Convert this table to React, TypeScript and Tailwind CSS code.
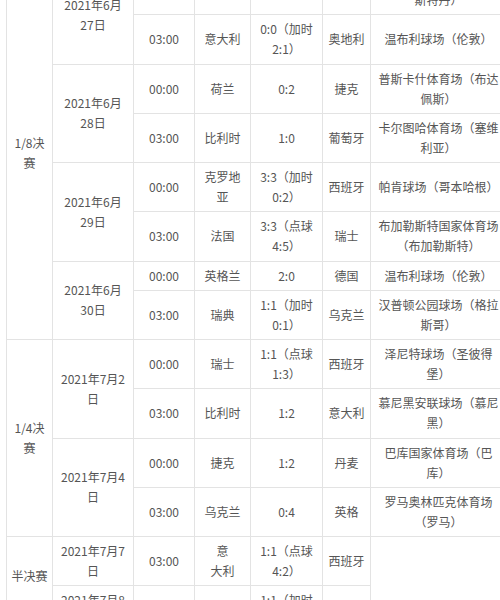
import React from 'react';

type Cell = { text: string; rowSpan?: number };

// each string uses "|" for a line break
const rows: Cell[][] = [
  [{ text: '1/8决|赛', rowSpan: 8 }, { text: '2021年6月|27日', rowSpan: 2 }, { text: '00:00' }, { text: '威尔士' }, { text: '0:4' }, { text: '丹麦' }, { text: '约翰·克鲁伊夫球场（阿姆|斯特丹）' }],
  [{ text: '03:00' }, { text: '意大利' }, { text: '0:0（加时|2:1）' }, { text: '奥地利' }, { text: '温布利球场（伦敦）' }],
  [{ text: '2021年6月|28日', rowSpan: 2 }, { text: '00:00' }, { text: '荷兰' }, { text: '0:2' }, { text: '捷克' }, { text: '普斯卡什体育场（布达|佩斯）' }],
  [{ text: '03:00' }, { text: '比利时' }, { text: '1:0' }, { text: '葡萄牙' }, { text: '卡尔图哈体育场（塞维|利亚）' }],
  [{ text: '2021年6月|29日', rowSpan: 2 }, { text: '00:00' }, { text: '克罗地|亚' }, { text: '3:3（加时|0:2）' }, { text: '西班牙' }, { text: '帕肯球场（哥本哈根）' }],
  [{ text: '03:00' }, { text: '法国' }, { text: '3:3（点球|4:5）' }, { text: '瑞士' }, { text: '布加勒斯特国家体育场|（布加勒斯特）' }],
  [{ text: '2021年6月|30日', rowSpan: 2 }, { text: '00:00' }, { text: '英格兰' }, { text: '2:0' }, { text: '德国' }, { text: '温布利球场（伦敦）' }],
  [{ text: '03:00' }, { text: '瑞典' }, { text: '1:1（加时|0:1）' }, { text: '乌克兰' }, { text: '汉普顿公园球场（格拉|斯哥）' }],
  [{ text: '1/4决|赛', rowSpan: 4 }, { text: '2021年7月2|日', rowSpan: 2 }, { text: '00:00' }, { text: '瑞士' }, { text: '1:1（点球|1:3）' }, { text: '西班牙' }, { text: '泽尼特球场（圣彼得|堡）' }],
  [{ text: '03:00' }, { text: '比利时' }, { text: '1:2' }, { text: '意大利' }, { text: '慕尼黑安联球场（慕尼|黑）' }],
  [{ text: '2021年7月4|日', rowSpan: 2 }, { text: '00:00' }, { text: '捷克' }, { text: '1:2' }, { text: '丹麦' }, { text: '巴库国家体育场（巴|库）' }],
  [{ text: '03:00' }, { text: '乌克兰' }, { text: '0:4' }, { text: '英格' }, { text: '罗马奥林匹克体育场|（罗马）' }],
  [{ text: '半决赛|\u00a0', rowSpan: 2 }, { text: '2021年7月7|日' }, { text: '03:00' }, { text: '意|大利' }, { text: '1:1（点球|4:2）' }, { text: '西班牙' }, { text: '', rowSpan: 2 }],
  [{ text: '2021年7月8|日' }, { text: '03:00' }, { text: '英格兰' }, { text: '1:1（加时|2:1）' }, { text: '丹麦' }],
];

const widths = ['w-[46px]', 'w-[81px]', 'w-[61px]', 'w-[56px]', 'w-[72px]', 'w-[48px]', 'w-[136px]'];

export default function App() {
  return (
    <div
      className="w-[500px] h-[600px] overflow-hidden bg-white text-[#555555]"
      style={{ fontFamily: '"Noto Sans CJK SC", "Noto Sans", sans-serif' }}
    >
      <table className="table-fixed border-collapse ml-[6px] -mt-[35px] w-[500px] text-[12px] leading-[20px]">
        <colgroup>
          {widths.map((w, i) => (
            <col key={i} className={w} />
          ))}
        </colgroup>
        <tbody>
          {rows.map((row, r) => (
            <tr key={r}>
              {row.map((cell, c) => (
                <td
                  key={c}
                  rowSpan={cell.rowSpan}
                  className="border border-[#e3e3e3] px-0 py-[4.14px] text-center align-middle whitespace-nowrap"
                >
                  {cell.text.split('|').map((line, i) => (
                    <div key={i}>{line}</div>
                  ))}
                </td>
              ))}
            </tr>
          ))}
        </tbody>
      </table>
    </div>
  );
}
